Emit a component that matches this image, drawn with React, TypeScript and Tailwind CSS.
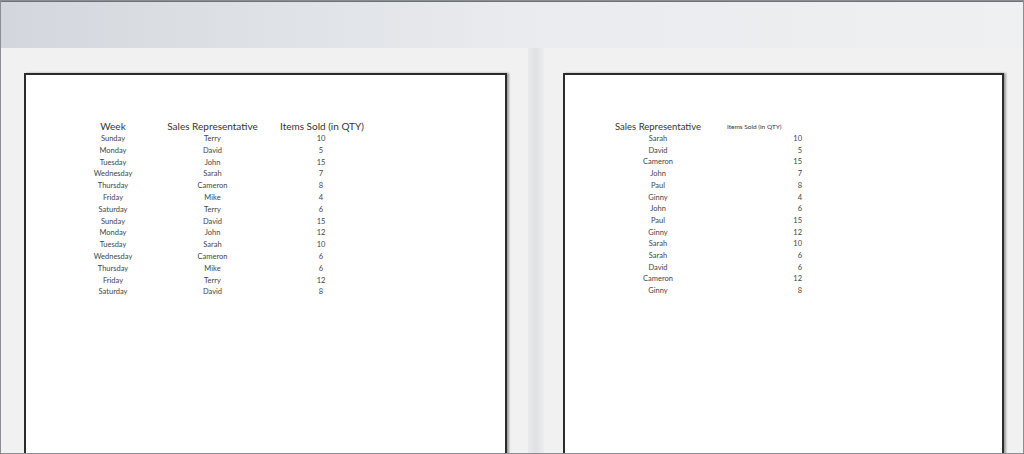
import React from "react";

const left = [
  ["Sunday", "Terry", "10"], ["Monday", "David", "5"], ["Tuesday", "John", "15"],
  ["Wednesday", "Sarah", "7"], ["Thursday", "Cameron", "8"], ["Friday", "Mike", "4"],
  ["Saturday", "Terry", "6"], ["Sunday", "David", "15"], ["Monday", "John", "12"],
  ["Tuesday", "Sarah", "10"], ["Wednesday", "Cameron", "6"], ["Thursday", "Mike", "6"],
  ["Friday", "Terry", "12"], ["Saturday", "David", "8"],
];

const right = [
  ["Sarah", "10"], ["David", "5"], ["Cameron", "15"], ["John", "7"], ["Paul", "8"],
  ["Ginny", "4"], ["John", "6"], ["Paul", "15"], ["Ginny", "12"], ["Sarah", "10"],
  ["Sarah", "6"], ["David", "6"], ["Cameron", "12"], ["Ginny", "8"],
];

export default function App() {
  return (
    <div
      className="h-[454px] w-[1024px] overflow-hidden flex flex-col border border-[#8a8d92] text-[#2a2a2a]"
      style={{ fontFamily: "Lato, 'Open Sans', sans-serif" }}
    >
      {/* ribbon strip */}
      <div className="h-[47px] shrink-0 bg-gradient-to-r from-[#d3d7dd] via-[#e9ebee] to-[#eef0f2] border-t border-[#6d7278]" />

      <div className="flex flex-1 min-h-0">
        {/* left preview */}
        <div className="w-[527px] bg-[#f1f1f1] pl-[23px] pr-[21px] pt-[25px]">
          <div className="h-[400px] bg-white border-2 border-[#2b2b2b] shadow-[2px_0_2px_rgba(0,0,0,0.35)]">
            <div className="pt-[45px] pl-[55px] flex flex-col">
              <div className="flex text-[10px] leading-[13px] text-[#333]">
                <div className="w-[64px] text-center">Week</div>
                <div className="w-[135px] text-center">Sales Representative</div>
                <div className="w-[82px] text-center whitespace-nowrap">Items Sold (in QTY)</div>
              </div>
              {left.map(([d, n, q], i) => (
                <div key={i} className="flex text-[7.5px] leading-[11.8px] text-[#444]">
                  <div className="w-[64px] text-center">{d}</div>
                  <div className="w-[135px] text-center">{n}</div>
                  <div className="w-[82px] text-center">{q}</div>
                </div>
              ))}
            </div>
          </div>
        </div>

        {/* separator */}
        <div className="w-[16px] bg-gradient-to-r from-[#e9eaec] via-[#dfe1e4] to-[#eceded]" />

        {/* right preview */}
        <div className="flex-1 bg-[#f1f1f1] pl-[19px] pr-[19px] pt-[25px]">
          <div className="h-[400px] bg-white border-2 border-[#2b2b2b] shadow-[2px_0_2px_rgba(0,0,0,0.35)]">
            <div className="pt-[45px] pl-[47px] flex flex-col">
              <div className="flex items-end text-[#333]">
                <div className="w-[92px] text-center text-[9.5px] leading-[13px]">Sales Representative</div>
                <div className="w-[100px] pl-[23px] text-[6.5px] leading-[12px] whitespace-nowrap">Items Sold (in QTY)</div>
              </div>
              {right.map(([n, q], i) => (
                <div key={i} className="flex text-[7.5px] leading-[11.7px] text-[#444]">
                  <div className="w-[92px] text-center">{n}</div>
                  <div className="w-[98px] text-right">{q}</div>
                </div>
              ))}
            </div>
          </div>
        </div>
      </div>
    </div>
  );
}
